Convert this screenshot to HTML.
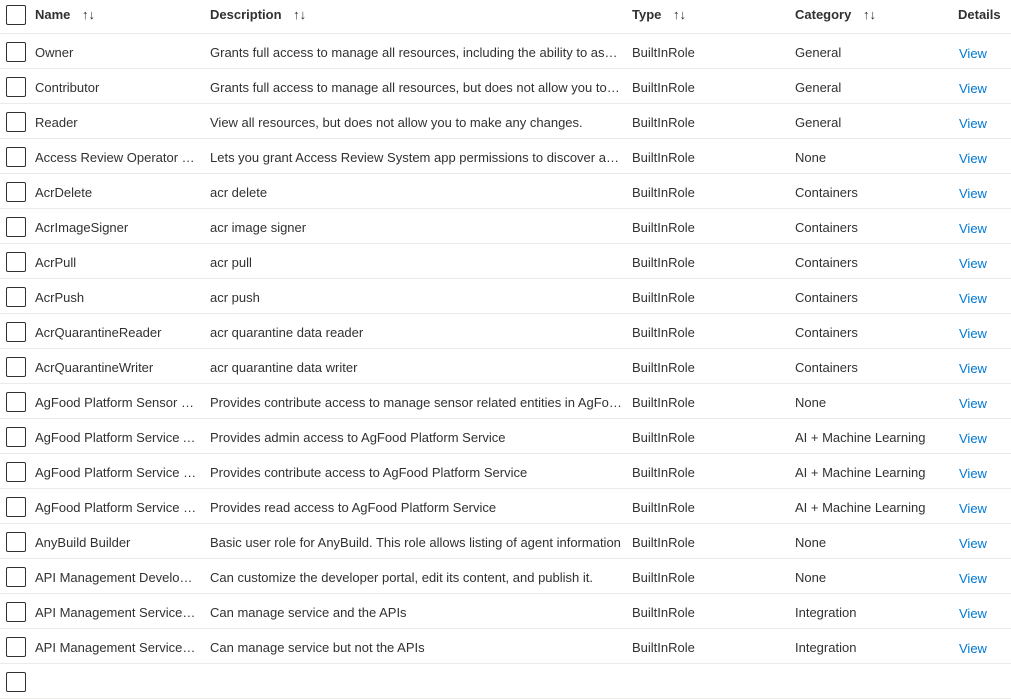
<!DOCTYPE html>
<html><head><meta charset="utf-8"><style>
*{margin:0;padding:0;box-sizing:border-box}
body{width:1011px;height:674px;overflow:hidden;background:#fff;font-family:"Liberation Sans",sans-serif;font-size:13px;color:#323130}
.row{position:relative;height:35px;border-bottom:1px solid #edebe9}
.hdr{height:34px;font-weight:bold}
.c{position:absolute;top:2px;line-height:34px;white-space:nowrap;overflow:hidden;text-overflow:ellipsis}
.cb{position:absolute;left:6px;top:8px;width:20px;height:20px;border:1px solid #323130;border-radius:2px}
.hdr .cb{top:5px}
.hdr .c{line-height:29px;top:0}
.n{left:35px;width:163px}.d{left:210px;width:413px}.t{left:632px;width:150px}.g{left:795px;width:150px}.v{left:959px;color:#0078d4;top:3px}
.s{font-weight:normal;margin-left:8px;font-size:13px}
</style></head><body>
<div class="row hdr"><div class="cb"></div><div class="c n">Name <span class="s">↑↓</span></div><div class="c d">Description <span class="s">↑↓</span></div><div class="c t">Type <span class="s">↑↓</span></div><div class="c g">Category <span class="s">↑↓</span></div><div class="c" style="left:958px">Details</div></div>
<div class="row"><div class="cb"></div><div class="c n">Owner</div><div class="c d">Grants full access to manage all resources, including the ability to assign roles</div><div class="c t">BuiltInRole</div><div class="c g">General</div><div class="c v">View</div></div>
<div class="row"><div class="cb"></div><div class="c n">Contributor</div><div class="c d">Grants full access to manage all resources, but does not allow you to assign roles</div><div class="c t">BuiltInRole</div><div class="c g">General</div><div class="c v">View</div></div>
<div class="row"><div class="cb"></div><div class="c n">Reader</div><div class="c d">View all resources, but does not allow you to make any changes.</div><div class="c t">BuiltInRole</div><div class="c g">General</div><div class="c v">View</div></div>
<div class="row"><div class="cb"></div><div class="c n">Access Review Operator Service Role</div><div class="c d">Lets you grant Access Review System app permissions to discover and revoke</div><div class="c t">BuiltInRole</div><div class="c g">None</div><div class="c v">View</div></div>
<div class="row"><div class="cb"></div><div class="c n">AcrDelete</div><div class="c d">acr delete</div><div class="c t">BuiltInRole</div><div class="c g">Containers</div><div class="c v">View</div></div>
<div class="row"><div class="cb"></div><div class="c n">AcrImageSigner</div><div class="c d">acr image signer</div><div class="c t">BuiltInRole</div><div class="c g">Containers</div><div class="c v">View</div></div>
<div class="row"><div class="cb"></div><div class="c n">AcrPull</div><div class="c d">acr pull</div><div class="c t">BuiltInRole</div><div class="c g">Containers</div><div class="c v">View</div></div>
<div class="row"><div class="cb"></div><div class="c n">AcrPush</div><div class="c d">acr push</div><div class="c t">BuiltInRole</div><div class="c g">Containers</div><div class="c v">View</div></div>
<div class="row"><div class="cb"></div><div class="c n">AcrQuarantineReader</div><div class="c d">acr quarantine data reader</div><div class="c t">BuiltInRole</div><div class="c g">Containers</div><div class="c v">View</div></div>
<div class="row"><div class="cb"></div><div class="c n">AcrQuarantineWriter</div><div class="c d">acr quarantine data writer</div><div class="c t">BuiltInRole</div><div class="c g">Containers</div><div class="c v">View</div></div>
<div class="row"><div class="cb"></div><div class="c n">AgFood Platform Sensor Partner Contributor</div><div class="c d">Provides contribute access to manage sensor related entities in AgFood Platform</div><div class="c t">BuiltInRole</div><div class="c g">None</div><div class="c v">View</div></div>
<div class="row"><div class="cb"></div><div class="c n">AgFood Platform Service Admin</div><div class="c d">Provides admin access to AgFood Platform Service</div><div class="c t">BuiltInRole</div><div class="c g">AI + Machine Learning</div><div class="c v">View</div></div>
<div class="row"><div class="cb"></div><div class="c n">AgFood Platform Service Contributor</div><div class="c d">Provides contribute access to AgFood Platform Service</div><div class="c t">BuiltInRole</div><div class="c g">AI + Machine Learning</div><div class="c v">View</div></div>
<div class="row"><div class="cb"></div><div class="c n">AgFood Platform Service Reader</div><div class="c d">Provides read access to AgFood Platform Service</div><div class="c t">BuiltInRole</div><div class="c g">AI + Machine Learning</div><div class="c v">View</div></div>
<div class="row"><div class="cb"></div><div class="c n">AnyBuild Builder</div><div class="c d">Basic user role for AnyBuild. This role allows listing of agent information</div><div class="c t">BuiltInRole</div><div class="c g">None</div><div class="c v">View</div></div>
<div class="row"><div class="cb"></div><div class="c n">API Management Developer Portal Content Editor</div><div class="c d">Can customize the developer portal, edit its content, and publish it.</div><div class="c t">BuiltInRole</div><div class="c g">None</div><div class="c v">View</div></div>
<div class="row"><div class="cb"></div><div class="c n">API Management Service Contributor</div><div class="c d">Can manage service and the APIs</div><div class="c t">BuiltInRole</div><div class="c g">Integration</div><div class="c v">View</div></div>
<div class="row"><div class="cb"></div><div class="c n">API Management Service Operator Role</div><div class="c d">Can manage service but not the APIs</div><div class="c t">BuiltInRole</div><div class="c g">Integration</div><div class="c v">View</div></div>
<div class="row"><div class="cb"></div></div>
</body></html>
